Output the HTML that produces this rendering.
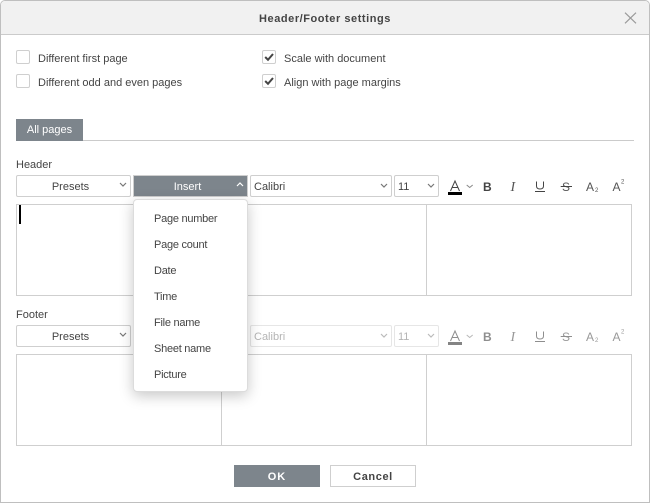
<!DOCTYPE html>
<html><head><meta charset="utf-8">
<style>
html,body{margin:0;padding:0;background:#fff}
body{width:650px;height:503px;overflow:hidden;position:relative;font-family:"Liberation Sans",Arial,sans-serif;font-size:11px;color:#444}
div,svg{position:absolute;box-sizing:border-box}
.t{white-space:nowrap;line-height:14px;height:14px}
.box{border:1px solid #cfcfcf;background:#fff;border-radius:2px}
.chk{width:14px;height:14px;border:1px solid #cfcfcf;border-radius:2px;background:#fff}
.c{text-align:center;white-space:nowrap}
.m{left:154px;white-space:nowrap;line-height:14px;height:14px;color:#444;letter-spacing:-.25px}
</style></head><body>
<div style="left:0;top:0;width:650px;height:503px;border:1px solid #bfbfbf;border-radius:5px 5px 0 0"></div>
<div style="left:1px;top:1px;width:648px;height:34px;background:#f1f1f1;border-bottom:1px solid #cbcbcb;border-radius:4px 4px 0 0"></div>
<div class="c" style="left:0;top:12px;width:650px;line-height:14px;font-weight:bold;font-size:11px;color:#444;letter-spacing:.55px">Header/Footer settings</div>
<svg style="left:624px;top:12px" width="13" height="13"><path d="M1 .7L12 11.3M12 .7L1 11.3" stroke="#9a9a9a" stroke-width="1.2" fill="none"/></svg>

<div class="chk" style="left:16px;top:50px"></div><div class="t" style="left:38px;top:52px">Different first page</div>
<div class="chk" style="left:16px;top:74px"></div><div class="t" style="left:38px;top:76px">Different odd and even pages</div>
<div class="chk" style="left:262px;top:50px"></div><svg style="left:262px;top:50px" width="14" height="14"><path d="M3.2 7L6 9.8L11 4" stroke="#444" stroke-width="2" fill="none"/></svg><div class="t" style="left:284px;top:52px">Scale with document</div>
<div class="chk" style="left:262px;top:74px"></div><svg style="left:262px;top:74px" width="14" height="14"><path d="M3.2 7L6 9.8L11 4" stroke="#444" stroke-width="2" fill="none"/></svg><div class="t" style="left:284px;top:76px">Align with page margins</div>

<div style="left:16px;top:140px;width:618px;height:1px;background:#cbcbcb"></div>
<div class="c" style="left:16px;top:119px;width:67px;height:22px;background:#7d858c;color:#fff;line-height:22px">All pages</div>

<div class="t" style="left:16px;top:158px">Header</div>
<div class="box c" style="left:16px;top:175px;width:115px;height:22px;line-height:22px;padding-right:6px">Presets</div>
<svg style="left:119px;top:182px" width="8" height="6"><path d="M1 1L4 4L7 1" stroke="#777" stroke-width="1.2" fill="none"/></svg>
<div class="c" style="left:133px;top:175px;width:115px;height:22px;line-height:22px;background:#7d858c;color:#fff;border:1px solid #cfcfcf;padding-right:6px">Insert</div>
<svg style="left:236px;top:182px" width="8" height="6"><path d="M1 4L4 1L7 4" stroke="#fff" stroke-width="1.2" fill="none"/></svg>
<div class="box" style="left:250px;top:175px;width:142px;height:22px;line-height:22px;padding-left:3px">Calibri</div>
<svg style="left:380px;top:183px" width="8" height="6"><path d="M1 1L4 4L7 1" stroke="#777" stroke-width="1.2" fill="none"/></svg>
<div class="box" style="left:394px;top:175px;width:45px;height:22px;line-height:22px;padding-left:3px">11</div>
<svg style="left:427px;top:183px" width="8" height="6"><path d="M1 1L4 4L7 1" stroke="#777" stroke-width="1.2" fill="none"/></svg>
<!-- format toolbar header -->
<svg style="left:446px;top:176px" width="190" height="22" fill="none" stroke="#444">
<path d="M4.500 15L9 5L13.500 15M6 11.500H12" stroke-width="1"/><rect x="2" y="16" width="14" height="3" fill="#000" stroke="none"/>
<path d="M20.700 9L23.700 11.500L26.700 9" stroke="#888"/>
<text x="37" y="15" font-family="Liberation Sans" font-size="12" font-weight="bold" fill="#444" stroke="none">B</text>
<text x="64.500" y="15" font-family="Liberation Serif" font-size="14" font-style="italic" fill="#555" stroke="none">I</text>
<path d="M90.500 5.500V10Q90.500 13 94 13T97.500 10V5.500" stroke-width="1"/><path d="M89 15.500H99"/>
<text x="116" y="15" font-family="Liberation Sans" font-size="12" fill="#555" stroke="none">S</text><path d="M114.700 10.500H126"/>
<text x="140" y="15" font-family="Liberation Sans" font-size="12" fill="#555" stroke="none">A</text><text x="149" y="16" font-family="Liberation Sans" font-size="6" fill="#555" stroke="none">2</text>
<text x="166.500" y="15" font-family="Liberation Sans" font-size="12" fill="#555" stroke="none">A</text><text x="175" y="7.500" font-family="Liberation Sans" font-size="6" fill="#555" stroke="none">2</text>
</svg>
<div class="box" style="left:16px;top:204px;width:616px;height:92px;border-radius:0"></div>
<div style="left:221px;top:205px;width:1px;height:90px;background:#cfcfcf"></div>
<div style="left:426px;top:205px;width:1px;height:90px;background:#cfcfcf"></div>
<div style="left:19px;top:205px;width:2px;height:19px;background:#000"></div>

<div class="t" style="left:16px;top:308px">Footer</div>
<div class="box c" style="left:16px;top:325px;width:115px;height:22px;line-height:22px;padding-right:6px">Presets</div>
<svg style="left:119px;top:332px" width="8" height="6"><path d="M1 1L4 4L7 1" stroke="#777" stroke-width="1.2" fill="none"/></svg>
<div class="box" style="left:250px;top:325px;width:142px;height:22px;line-height:22px;padding-left:3px;color:#b5b5b5;border-color:#e6e6e6">Calibri</div>
<svg style="left:380px;top:333px" width="8" height="6"><path d="M1 1L4 4L7 1" stroke="#bbb" stroke-width="1.2" fill="none"/></svg>
<div class="box" style="left:394px;top:325px;width:45px;height:22px;line-height:22px;padding-left:3px;color:#b5b5b5;border-color:#e6e6e6">11</div>
<svg style="left:427px;top:333px" width="8" height="6"><path d="M1 1L4 4L7 1" stroke="#bbb" stroke-width="1.2" fill="none"/></svg>
<svg style="left:446px;top:326px;opacity:.6" width="190" height="22" fill="none" stroke="#444">
<path d="M4.500 15L9 5L13.500 15M6 11.500H12" stroke-width="1"/><rect x="2" y="16" width="14" height="3" fill="#333" stroke="none"/>
<path d="M20.700 9L23.700 11.500L26.700 9" stroke="#888"/>
<text x="37" y="15" font-family="Liberation Sans" font-size="12" font-weight="bold" fill="#444" stroke="none">B</text>
<text x="64.500" y="15" font-family="Liberation Serif" font-size="14" font-style="italic" fill="#555" stroke="none">I</text>
<path d="M90.500 5.500V10Q90.500 13 94 13T97.500 10V5.500" stroke-width="1"/><path d="M89 15.500H99"/>
<text x="116" y="15" font-family="Liberation Sans" font-size="12" fill="#555" stroke="none">S</text><path d="M114.700 10.500H126"/>
<text x="140" y="15" font-family="Liberation Sans" font-size="12" fill="#555" stroke="none">A</text><text x="149" y="16" font-family="Liberation Sans" font-size="6" fill="#555" stroke="none">2</text>
<text x="166.500" y="15" font-family="Liberation Sans" font-size="12" fill="#555" stroke="none">A</text><text x="175" y="7.500" font-family="Liberation Sans" font-size="6" fill="#555" stroke="none">2</text>
</svg>
<div class="box" style="left:16px;top:354px;width:616px;height:92px;border-radius:0"></div>
<div style="left:221px;top:355px;width:1px;height:90px;background:#cfcfcf"></div>
<div style="left:426px;top:355px;width:1px;height:90px;background:#cfcfcf"></div>

<div style="left:133px;top:199px;width:115px;height:193px;background:#fff;border:1px solid #dcdcdc;border-radius:4px;box-shadow:0 4px 14px rgba(0,0,0,.22)"></div>
<div class="m" style="top:212px">Page number</div>
<div class="m" style="top:238px">Page count</div>
<div class="m" style="top:264px">Date</div>
<div class="m" style="top:290px">Time</div>
<div class="m" style="top:316px">File name</div>
<div class="m" style="top:342px">Sheet name</div>
<div class="m" style="top:368px">Picture</div>

<div class="c" style="left:234px;top:465px;width:86px;height:22px;line-height:24px;background:#7d858c;color:#fff;font-weight:bold;letter-spacing:1px">OK</div>
<div class="box c" style="left:330px;top:465px;width:86px;height:22px;line-height:22px;font-weight:bold;border-radius:0;letter-spacing:.6px">Cancel</div>
</body></html>
